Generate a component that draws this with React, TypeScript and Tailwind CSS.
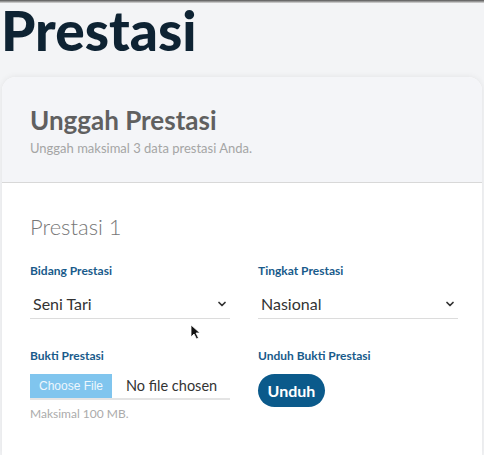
import React from 'react';

const ChevronDown = () => (
  <svg width="12" height="12" viewBox="0 0 24 24" fill="none" stroke="#333" strokeWidth="3.5" strokeLinecap="round" strokeLinejoin="round">
    <path d="M6 9l6 6 6-6" />
  </svg>
);

const SelectField = ({ label, value }: { label: string; value: string }) => (
  <div className="flex flex-col">
    <label className="text-[12px] font-bold text-[#195b8b] leading-none">{label}</label>
    <div className="mt-[12px] flex h-[30px] items-center justify-between border-b border-[#dcdcdc] pl-[3px] pr-[2px]">
      <span className="text-[16px] text-[#333]">{value}</span>
      <ChevronDown />
    </div>
  </div>
);

export default function App() {
  return (
    <div className="relative min-h-[455px] overflow-hidden bg-[#f3f4f6] font-['Lato','Noto_Sans',sans-serif]">
      <div className="h-[3px] bg-gradient-to-b from-[#555] to-[#ddd]" />
      <h1 className="pl-[1px] text-[55px] font-black leading-[54px] text-[#0e2333]">Prestasi</h1>

      <div className="ml-[2px] mr-[2px] mt-[20px] overflow-hidden rounded-t-[14px] bg-white shadow-[0_0_6px_rgba(0,0,0,0.08)]">
        <div className="h-[106px] border-b border-[#d8d8d8] bg-[#f4f5f8] px-[28px] pt-[28px]">
          <h2 className="text-[26px] font-bold leading-[30px] text-[#606060]">Unggah Prestasi</h2>
          <p className="mt-[4px] text-[13px] text-[#a5a5a5]">Unggah maksimal 3 data prestasi Anda.</p>
        </div>

        <div className="min-h-[272px] px-[28px] pt-[29px]">
          <h3 className="text-[22px] font-light leading-[30px] text-[#777]">Prestasi 1</h3>

          <div className="mt-[23px] grid grid-cols-[200px_200px] gap-x-[28px]">
            <SelectField label="Bidang Prestasi" value="Seni Tari" />
            <SelectField label="Tingkat Prestasi" value="Nasional" />

            <div className="mt-[31px] flex flex-col">
              <label className="text-[12px] font-bold text-[#195b8b] leading-none">Bukti Prestasi</label>
              <div className="mt-[12px] flex h-[26px] items-stretch border-b-2 border-[#e4e4e4]">
                <span className="flex w-[82px] items-center justify-center bg-[#80c5ee] font-['Liberation_Sans',sans-serif] text-[12px] text-[#eef7fd]">Choose File</span>
                <span className="ml-[14px] flex items-center text-[14.5px] text-[#333]">No file chosen</span>
              </div>
              <p className="mt-[5px] text-[12px] text-[#ababab]">Maksimal 100 MB.</p>
            </div>

            <div className="mt-[31px] flex flex-col">
              <label className="text-[12px] font-bold text-[#195b8b] leading-none">Unduh Bukti Prestasi</label>
              <button className="mt-[12px] h-[33px] w-[67px] rounded-full bg-[#0b5a8b] text-[16px] font-bold text-white">Unduh</button>
            </div>
          </div>
        </div>
      </div>

      <svg className="absolute left-[190px] top-[324px]" width="11" height="16" viewBox="0 0 11 16">
        <path d="M1 1 L1 13 L4 10 L6.5 15 L8.5 14 L6 9 L10 9 Z" fill="#111" stroke="#fff" strokeWidth="0.8" />
      </svg>
    </div>
  );
}
